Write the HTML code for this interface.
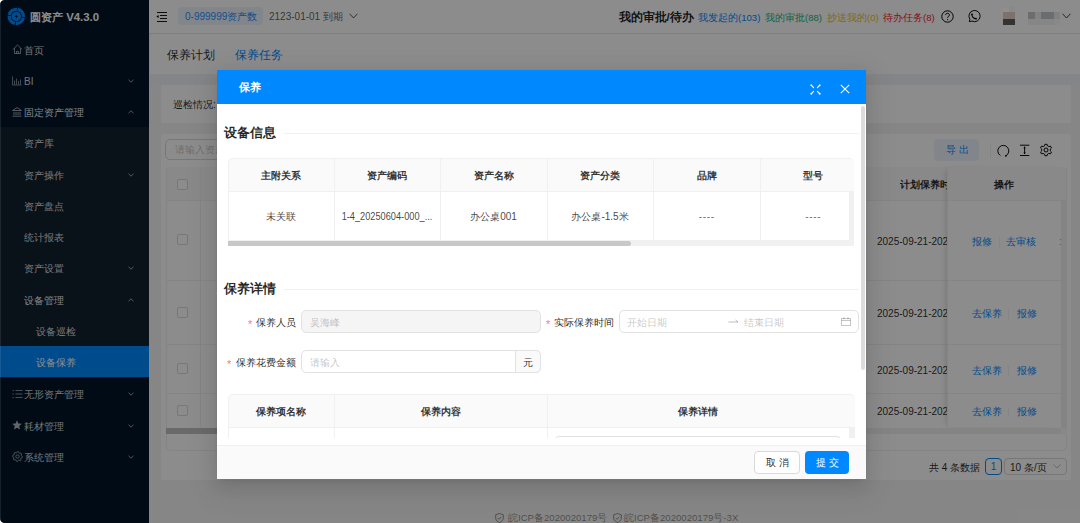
<!DOCTYPE html>
<html><head><meta charset="utf-8">
<style>
*{box-sizing:border-box;margin:0;padding:0}
html,body{width:1080px;height:523px;overflow:hidden;font-family:"Liberation Sans",sans-serif;font-size:10px;color:rgba(0,0,0,.85);background:#f5f5f5;position:relative}
.a{position:absolute;white-space:nowrap}
#side{position:absolute;left:0;top:0;width:149px;height:523px;background:#001529}
#side .it{position:absolute;left:0;width:149px;height:31px;color:rgba(255,255,255,.84);font-size:10px;line-height:31px}
#side .it span{top:1px}
#sub{position:absolute;left:0;top:127px;width:149px;height:251px;background:#12202f}
.chev{position:absolute;left:128px;width:6px;height:6px}
#hdr{position:absolute;left:149px;top:0;width:931px;height:34px;background:#fff;border-bottom:1px solid #e8e8e8}
.card{position:absolute;background:#fff;border-radius:3px}
#mask{position:absolute;left:0;top:0;width:1080px;height:523px;background:rgba(0,0,0,.45)}
#modal{position:absolute;left:217px;top:70px;width:649px;height:409px;background:#fff;box-shadow:0 6px 16px 0 rgba(0,0,0,.1),0 3px 6px -4px rgba(0,0,0,.14),0 9px 28px 8px rgba(0,0,0,.06);overflow:hidden}
#mhead{position:absolute;left:0;top:0;width:649px;height:34px;background:#0089ff;color:#fff}
.th{position:absolute;top:0;height:34px;line-height:34px;padding-top:1px;text-align:center;font-weight:bold;font-size:10px;color:rgba(0,0,0,.8)}
.td{position:absolute;height:48px;line-height:48px;text-align:center;font-size:10px;color:rgba(0,0,0,.75)}
.vl{position:absolute;width:1px;background:#f0f0f0}
.hl{position:absolute;height:1px;background:#f0f0f0}
.cb{position:absolute;width:11px;height:11px;border:1px solid #d9d9d9;border-radius:2px;background:#fff}
</style></head><body>

<!-- ============ SIDEBAR ============ -->
<div id="side">
  <svg class="a" style="left:7px;top:7px" width="19" height="19" viewBox="0 0 19 19">
    <circle cx="9.3" cy="9.4" r="7.1" fill="none" stroke="#0089ff" stroke-width="3.3" stroke-dasharray="10.3 0.85" transform="rotate(-80 9.3 9.4)"/>
    <circle cx="9.3" cy="9.4" r="4.75" fill="#0089ff"/>
    <path d="M9.3 7.6 L9.85 8.85 L11.1 9.4 L9.85 9.95 L9.3 11.2 L8.75 9.95 L7.5 9.4 L8.75 8.85Z" fill="#001529"/>
  </svg>
  <div class="a" style="left:30px;top:10px;font-size:11.4px;font-weight:bold;color:#fff;line-height:14px">圆资产 V4.3.0</div>

  <div id="sub"></div>
  <div class="it" style="top:34px"><svg class="a" style="left:12px;top:10px" width="11" height="11" viewBox="0 0 11 11"><path d="M.8 5.6 L5.5 1 L10.2 5.6 M2.5 4.2 V9.5 H8.5 V4.2 M4.5 9.5 V7.5 H6.5 V9.5" fill="none" stroke="rgba(255,255,255,.65)" stroke-width=".85" stroke-linejoin="round"/></svg><span class="a" style="left:24px">首页</span></div>
  <div class="it" style="top:65px"><svg class="a" style="left:12px;top:11px" width="10" height="10" viewBox="0 0 10 10"><path d="M.5 .5 V9 H9.5 M2.5 8.5 V4.5 M4.5 8.5 V2.5 M6.5 8.5 V5 M8.5 8.5 V3.5" fill="none" stroke="rgba(255,255,255,.6)" stroke-width=".8"/></svg><span class="a" style="left:24px">BI</span><svg class="chev" style="top:13px" viewBox="0 0 6 6"><path d="M0.5 1.8 L3 4.2 L5.5 1.8" fill="none" stroke="rgba(255,255,255,.65)" stroke-width=".9"/></svg></div>
  <div class="it" style="top:96px;color:rgba(255,255,255,.95)"><svg class="a" style="left:12px;top:10.5px" width="10" height="10" viewBox="0 0 10 10"><path d="M.6 3.5 L5 .6 L9.4 3.5 Z M2 4.8 V8 M4 4.8 V8 M6 4.8 V8 M8 4.8 V8 M.5 9.2 H9.5" fill="none" stroke="rgba(255,255,255,.7)" stroke-width=".85"/></svg><span class="a" style="left:24px">固定资产管理</span><svg class="chev" style="top:13px" viewBox="0 0 6 6"><path d="M0.5 4.2 L3 1.8 L5.5 4.2" fill="none" stroke="rgba(255,255,255,.65)" stroke-width=".9"/></svg></div>
  <div class="it" style="top:127px"><span class="a" style="left:24px">资产库</span></div>
  <div class="it" style="top:159px"><span class="a" style="left:24px">资产操作</span><svg class="chev" style="top:13px" viewBox="0 0 6 6"><path d="M0.5 1.8 L3 4.2 L5.5 1.8" fill="none" stroke="rgba(255,255,255,.65)" stroke-width=".9"/></svg></div>
  <div class="it" style="top:190px"><span class="a" style="left:24px">资产盘点</span></div>
  <div class="it" style="top:221px"><span class="a" style="left:24px">统计报表</span></div>
  <div class="it" style="top:252px"><span class="a" style="left:24px">资产设置</span><svg class="chev" style="top:13px" viewBox="0 0 6 6"><path d="M0.5 1.8 L3 4.2 L5.5 1.8" fill="none" stroke="rgba(255,255,255,.65)" stroke-width=".9"/></svg></div>
  <div class="it" style="top:284px;color:rgba(255,255,255,.95)"><span class="a" style="left:24px">设备管理</span><svg class="chev" style="top:13px" viewBox="0 0 6 6"><path d="M0.5 4.2 L3 1.8 L5.5 4.2" fill="none" stroke="rgba(255,255,255,.65)" stroke-width=".9"/></svg></div>
  <div class="it" style="top:315px"><span class="a" style="left:35.5px">设备巡检</span></div>
  <div class="it" style="top:346px;background:#0089ff;color:#fff"><span class="a" style="left:35.5px">设备保养</span></div>
  <div class="it" style="top:378px"><svg class="a" style="left:12px;top:11px" width="11" height="10" viewBox="0 0 11 10"><path d="M.5 1.5 H1.8 M.5 5 H1.8 M.5 8.5 H1.8 M3.5 1.5 H10.5 M3.5 5 H10.5 M3.5 8.5 H10.5" fill="none" stroke="rgba(255,255,255,.65)" stroke-width=".8"/></svg><span class="a" style="left:24px">无形资产管理</span><svg class="chev" style="top:13px" viewBox="0 0 6 6"><path d="M0.5 1.8 L3 4.2 L5.5 1.8" fill="none" stroke="rgba(255,255,255,.65)" stroke-width=".9"/></svg></div>
  <div class="it" style="top:410px"><svg class="a" style="left:12px;top:10px" width="10" height="10" viewBox="0 0 10 10"><path d="M5 .3 L6.4 3.4 L9.8 3.7 L7.2 6 L8 9.5 L5 7.7 L2 9.5 L2.8 6 L.2 3.7 L3.6 3.4Z" fill="rgba(255,255,255,.7)"/></svg><span class="a" style="left:24px">耗材管理</span><svg class="chev" style="top:13px" viewBox="0 0 6 6"><path d="M0.5 1.8 L3 4.2 L5.5 1.8" fill="none" stroke="rgba(255,255,255,.65)" stroke-width=".9"/></svg></div>
  <div class="it" style="top:441px"><svg class="a" style="left:12px;top:10px" width="11" height="11" viewBox="0 0 11 11"><path d="M5.50 0.60 L6.46 0.69 L6.99 1.90 L7.67 2.26 L8.96 2.04 L9.57 2.78 L9.10 4.01 L9.33 4.74 L10.40 5.50 L10.31 6.46 L9.10 6.99 L8.74 7.67 L8.96 8.96 L8.22 9.57 L6.99 9.10 L6.26 9.33 L5.50 10.40 L4.54 10.31 L4.01 9.10 L3.33 8.74 L2.04 8.96 L1.43 8.22 L1.90 6.99 L1.67 6.26 L0.60 5.50 L0.69 4.54 L1.90 4.01 L2.26 3.33 L2.04 2.04 L2.78 1.43 L4.01 1.90 L4.74 1.67Z" fill="none" stroke="rgba(255,255,255,.65)" stroke-width=".8" stroke-linejoin="round"/><circle cx="5.5" cy="5.5" r="1.7" fill="none" stroke="rgba(255,255,255,.65)" stroke-width=".8"/></svg><span class="a" style="left:24px">系统管理</span><svg class="chev" style="top:13px" viewBox="0 0 6 6"><path d="M0.5 1.8 L3 4.2 L5.5 1.8" fill="none" stroke="rgba(255,255,255,.65)" stroke-width=".9"/></svg></div>
</div>

<!-- ============ HEADER ============ -->
<div id="hdr">
  <svg class="a" style="left:7px;top:11px" width="12" height="11" viewBox="0 0 12 11"><path d="M.5 1 H11 M4 4 H11 M4 7 H11 M.5 10 H11" stroke="#000" stroke-width=".9" fill="none" shape-rendering="crispEdges"/><path d="M.3 5.5 L2.6 3.9 V7.1Z" fill="#000"/></svg>
  <div class="a" style="left:29px;top:7px;width:85px;height:18px;background:#edf5fd;border-radius:3px"></div>
  <div class="a" style="left:36px;top:10px;font-size:10px;line-height:13px;color:#2a8eff">0-999999资产数</div>
  <div class="a" style="left:120px;top:10px;font-size:10px;line-height:13px;color:rgba(0,0,0,.65)">2123-01-01 到期</div>
  <svg class="a" style="left:200px;top:13px" width="9" height="6" viewBox="0 0 9 6"><path d="M0.5 0.7 L4.5 5 L8.5 0.7" fill="none" stroke="rgba(0,0,0,.65)" stroke-width="1"/></svg>

  <div class="a" style="left:469.5px;top:10px;font-size:11.5px;line-height:14px;font-weight:bold;color:rgba(0,0,0,.88)">我的审批/待办</div>
  <div class="a" style="left:549px;top:11.5px;font-size:9.6px;line-height:12px;color:#0089ff">我发起的(103)</div>
  <div class="a" style="left:616px;top:11.5px;font-size:9.6px;line-height:12px;color:#1fb27a">我的审批(88)</div>
  <div class="a" style="left:678px;top:11.5px;font-size:9.6px;line-height:12px;color:#eec21c">抄送我的(0)</div>
  <div class="a" style="left:734px;top:11.5px;font-size:9.6px;line-height:12px;color:#f5222d">待办任务(8)</div>
  <svg class="a" style="left:792px;top:10px" width="13" height="13" viewBox="0 0 13 13"><circle cx="6.5" cy="6.5" r="5.7" fill="none" stroke="#000" stroke-width="1"/><path d="M4.6 5.1 C4.6 3.9 5.5 3.3 6.5 3.3 C7.6 3.3 8.4 4 8.4 5 C8.4 6.2 6.6 6.4 6.6 7.8" fill="none" stroke="#000" stroke-width="1"/><circle cx="6.6" cy="9.6" r=".6" fill="#000"/></svg>
  <svg class="a" style="left:818px;top:10px" width="14" height="14" viewBox="0 0 14 14"><path d="M2.3 11.6 L2.9 9.2 A5.6 5.6 0 1 1 5.1 11.1 Z" fill="none" stroke="#000" stroke-width=".95" stroke-linejoin="round"/><path d="M4.9 4.3 C4.7 6.6 6.6 8.7 9 8.7" fill="none" stroke="#000" stroke-width="1.1" stroke-linecap="round"/><circle cx="5" cy="4.3" r=".85" fill="#000"/><circle cx="9" cy="8.6" r=".85" fill="#000"/></svg>
  <svg class="a" style="left:913px;top:13px" width="9" height="6" viewBox="0 0 9 6"><path d="M0.5 0.7 L4.5 5 L8.5 0.7" fill="none" stroke="rgba(0,0,0,.75)" stroke-width="1"/></svg>
</div>

<!-- ============ MAIN ============ -->
<div class="card" style="left:150px;top:34px;width:930px;height:40px;border-radius:5px 0 0 0"></div>
<div class="a" style="left:167px;top:47.5px;font-size:11.5px;line-height:14px;color:rgba(0,0,0,.85)">保养计划</div>
<div class="a" style="left:235px;top:47.5px;font-size:11.5px;line-height:14px;color:#0089ff">保养任务</div>

<div class="a" style="left:149px;top:74px;width:931px;height:11px;background:#f0f2f5"></div>
<div class="card" style="left:161px;top:85px;width:910px;height:38px;border-radius:0"></div>
<div class="a" style="left:173px;top:98px;font-size:10px;line-height:13px">巡检情况:</div>

<div class="card" style="left:161px;top:134px;width:910px;height:346px;border-radius:1px"></div>
<div class="a" style="left:165px;top:139px;width:120px;height:21px;border:1px solid #d9d9d9;border-radius:5px"></div>
<div class="a" style="left:175px;top:144px;font-size:10px;line-height:12px;color:rgba(0,0,0,.25)">请输入资产</div>
<div class="a" style="left:934px;top:139px;width:45px;height:22px;background:#edf4fc;border-radius:4px"></div>
<div class="a" style="left:946px;top:144px;font-size:10px;line-height:12px;color:#0089ff;letter-spacing:3px">导出</div>
<div class="a" style="left:990px;top:143px;width:1px;height:15px;background:#f0f0f0"></div>
<svg class="a" style="left:996px;top:144px" width="14" height="14" viewBox="0 0 14 14"><path d="M4.3 11.5 A5.5 5.5 0 1 1 9.8 11.8" fill="none" stroke="#000" stroke-width=".95"/><circle cx="9.9" cy="11.8" r=".9" fill="#000"/></svg>
<svg class="a" style="left:1019px;top:144px" width="12" height="13" viewBox="0 0 12 13"><path d="M1 1.2 H10.3 M1 11.5 H10.3 M5.6 2.8 V9.8" fill="none" stroke="#000" stroke-width=".95"/><path d="M4.4 4.2 L5.6 2.4 L6.8 4.2Z M4.4 8.5 L5.6 10.3 L6.8 8.5Z" fill="#000"/></svg>
<svg class="a" style="left:1039px;top:143px" width="14" height="14" viewBox="0 0 14 14"><path d="M5.9 1.3 H8.1 L8.5 2.9 L9.8 3.6 L11.4 3.1 L12.5 5 L11.3 6.1 V7.9 L12.5 9 L11.4 10.9 L9.8 10.4 L8.5 11.1 L8.1 12.7 H5.9 L5.5 11.1 L4.2 10.4 L2.6 10.9 L1.5 9 L2.7 7.9 V6.1 L1.5 5 L2.6 3.1 L4.2 3.6 L5.5 2.9Z" fill="none" stroke="#000" stroke-width=".95" stroke-linejoin="round"/><circle cx="7" cy="7" r="2" fill="none" stroke="#000" stroke-width=".95"/></svg>

<!-- bg table -->
<div class="a" style="left:166px;top:167px;width:900px;height:34px;background:#fafafa;border-radius:5px 5px 0 0"></div>
<div class="hl" style="left:166px;top:200px;width:900px"></div>
<div class="hl" style="left:166px;top:280px;width:900px"></div>
<div class="hl" style="left:166px;top:344px;width:900px"></div>
<div class="hl" style="left:166px;top:393px;width:900px"></div>
<div class="vl" style="left:200px;top:167px;height:260px"></div>
<div class="a" style="left:947px;top:167px;width:114px;height:260px;box-shadow:-4px 0 6px -3px rgba(0,0,0,.15);background:transparent"></div>
<div class="vl" style="left:947px;top:167px;height:260px"></div>
<div class="vl" style="left:1061px;top:201px;height:226px"></div>
<div class="a" style="left:1061px;top:201px;width:6px;height:227px;background:#f0f0f0"></div>
<div class="cb" style="left:177px;top:179px"></div>
<div class="cb" style="left:177px;top:234px"></div>
<div class="cb" style="left:177px;top:307px"></div>
<div class="cb" style="left:177px;top:363px"></div>
<div class="cb" style="left:177px;top:405px"></div>
<div class="a" style="left:166px;top:167px;width:901px;height:284px;border:1px solid #f0f0f0;border-top:0;border-radius:0 0 5px 5px"></div>
<div class="a" style="left:166px;top:428px;width:895px;height:6px;background:#f0f0f0"></div>
<div class="a" style="left:1061px;top:428px;width:6px;height:6px;background:#f8f8f8"></div>
<div class="a" style="left:166px;top:428px;width:400px;height:6px;background:#c1c1c1;border-radius:0 3px 3px 0"></div>
<div class="a" style="left:900px;top:178px;font-size:10px;line-height:13px;font-weight:bold;width:47px;overflow:hidden">计划保养时间</div>
<div class="a" style="left:994px;top:178px;font-size:10px;line-height:13px;font-weight:bold">操作</div>
<div class="a" style="left:877px;top:235px;font-size:10px;line-height:13px;width:70px;overflow:hidden">2025-09-21-2025</div>
<div class="a" style="left:877px;top:307px;font-size:10px;line-height:13px;width:70px;overflow:hidden">2025-09-21-2025</div>
<div class="a" style="left:877px;top:364px;font-size:10px;line-height:13px;width:70px;overflow:hidden">2025-09-21-2025</div>
<div class="a" style="left:877px;top:405px;font-size:10px;line-height:13px;width:70px;overflow:hidden">2025-09-21-2025</div>
<div class="a" style="left:972px;top:235px;font-size:10px;line-height:13px;color:#0089ff">报修</div>
<div class="a" style="left:999px;top:237px;width:1px;height:10px;background:#f0f0f0"></div>
<div class="a" style="left:1006px;top:235px;font-size:10px;line-height:13px;color:#0089ff">去审核</div>
<div class="a" style="left:1059px;top:235px;font-size:10px;line-height:13px;color:rgba(0,0,0,.45)">:</div>
<div class="a" style="left:972px;top:307px;font-size:10px;line-height:13px;color:#0089ff">去保养</div>
<div class="a" style="left:1008px;top:309px;width:1px;height:10px;background:#f0f0f0"></div>
<div class="a" style="left:1017px;top:307px;font-size:10px;line-height:13px;color:#0089ff">报修</div>
<div class="a" style="left:972px;top:364px;font-size:10px;line-height:13px;color:#0089ff">去保养</div>
<div class="a" style="left:1008px;top:366px;width:1px;height:10px;background:#f0f0f0"></div>
<div class="a" style="left:1017px;top:364px;font-size:10px;line-height:13px;color:#0089ff">报修</div>
<div class="a" style="left:972px;top:405px;font-size:10px;line-height:13px;color:#0089ff">去保养</div>
<div class="a" style="left:1008px;top:407px;width:1px;height:10px;background:#f0f0f0"></div>
<div class="a" style="left:1017px;top:405px;font-size:10px;line-height:13px;color:#0089ff">报修</div>

<!-- pagination -->
<div class="a" style="left:929px;top:461px;font-size:10px;line-height:13px">共 4 条数据</div>
<div class="a" style="left:985px;top:458px;width:17px;height:17px;border:1px solid #0089ff;border-radius:4px;text-align:center;line-height:15px;font-size:10px;color:#0089ff">1</div>
<div class="a" style="left:1004px;top:458px;width:63px;height:17px;border:1px solid #d9d9d9;border-radius:4px"></div>
<div class="a" style="left:1010px;top:461px;font-size:10px;line-height:13px">10 条/页</div>
<svg class="a" style="left:1053px;top:464px" width="8" height="5" viewBox="0 0 8 5"><path d="M0.5 0.5 L4 4 L7.5 0.5" fill="none" stroke="rgba(0,0,0,.25)" stroke-width="1"/></svg>

<!-- footer -->
<svg class="a" style="left:495px;top:513px" width="9" height="10" viewBox="0 0 9 10"><path d="M4.5 .5 L8.3 1.8 V5 C8.3 7.3 6.5 8.8 4.5 9.5 C2.5 8.8 .7 7.3 .7 5 V1.8Z" fill="none" stroke="rgba(0,0,0,.45)" stroke-width=".9"/><path d="M2.8 5 L4.1 6.3 L6.3 3.8" fill="none" stroke="rgba(0,0,0,.45)" stroke-width=".9"/></svg>
<div class="a" style="left:508px;top:512px;font-size:9.6px;line-height:12px;color:rgba(0,0,0,.45)">皖ICP备2020020179号</div>
<svg class="a" style="left:613px;top:513px" width="9" height="10" viewBox="0 0 9 10"><path d="M4.5 .5 L8.3 1.8 V5 C8.3 7.3 6.5 8.8 4.5 9.5 C2.5 8.8 .7 7.3 .7 5 V1.8Z" fill="none" stroke="rgba(0,0,0,.45)" stroke-width=".9"/><path d="M2.8 5 L4.1 6.3 L6.3 3.8" fill="none" stroke="rgba(0,0,0,.45)" stroke-width=".9"/></svg>
<div class="a" style="left:624px;top:512px;font-size:9.6px;line-height:12px;color:rgba(0,0,0,.45)">皖ICP备2020020179号-3X</div>

<!-- ============ MASK ============ -->
<div id="mask"></div>

<!-- mosaic (unmasked) -->
<div class="a" style="left:1003px;top:8px;width:6px;height:4px;background:#8f8f8f"></div>
<div class="a" style="left:1009px;top:6px;width:6px;height:6px;background:#898989"></div>
<div class="a" style="left:1003px;top:12px;width:12px;height:7px;background:#7d716d"></div>
<div class="a" style="left:1022px;top:12px;width:6px;height:7px;background:#8e8d8b"></div>
<div class="a" style="left:1028px;top:12px;width:7px;height:7px;background:#6d6d6b"></div>
<div class="a" style="left:1035px;top:12px;width:6px;height:7px;background:#828382"></div>
<div class="a" style="left:1041px;top:12px;width:7px;height:7px;background:#686d72"></div>
<div class="a" style="left:1048px;top:12px;width:6px;height:7px;background:#6c6e6c"></div>
<div class="a" style="left:1054px;top:12px;width:6px;height:7px;background:#7f8284"></div>
<div class="a" style="left:1003px;top:19px;width:12px;height:6px;background:#333333"></div>
<div class="a" style="left:1028px;top:19px;width:26px;height:6px;background:#858787"></div>
<div class="a" style="left:1054px;top:19px;width:6px;height:6px;background:#888a89"></div>

<!-- ============ MODAL ============ -->
<div id="modal">
  <div id="mhead">
    <div class="a" style="left:22px;top:11px;font-size:11px;font-weight:bold;line-height:13px">保养</div>
    <svg class="a" style="left:593px;top:14px" width="11" height="11" viewBox="0 0 11 11"><g fill="none" stroke="#fff" stroke-width="1.1" stroke-linecap="round"><path d="M1.2 1.2 L3.6 3.6"/><path d="M9.8 1.2 L7.4 3.6"/><path d="M1.2 9.8 L3.6 7.4"/><path d="M9.8 9.8 L7.4 7.4"/></g><g fill="#fff"><circle cx="1.3" cy="1.3" r=".9"/><circle cx="9.7" cy="1.3" r=".9"/><circle cx="1.3" cy="9.7" r=".9"/><circle cx="9.7" cy="9.7" r=".9"/></g></svg>
    <svg class="a" style="left:623px;top:14px" width="10" height="10" viewBox="0 0 10 10"><path d="M.8 .8 L9.2 9.2 M9.2 .8 L.8 9.2" stroke="#fff" stroke-width="1.1"/></svg>
  </div>
  <!-- body scrollbar -->
  <div class="a" style="left:644px;top:36px;width:4px;height:264px;background:#dcdcdc;border-radius:2px"></div>

  <div class="a" style="left:7px;top:55px;font-size:12.6px;line-height:16px;font-weight:bold">设备信息</div>
  <div class="hl" style="left:67px;top:63px;width:575px"></div>

  <!-- table 1 -->
  <div class="a" style="left:11px;top:88px;width:626px;height:33px;background:#fafafa;border-radius:5px 5px 0 0"></div>
  <div class="a" style="left:11px;top:88px;width:626px;height:83px;border:1px solid #f0f0f0;border-bottom:0;border-right:0;border-radius:5px 5px 0 0"></div>
  <div class="hl" style="left:11px;top:121px;width:626px"></div>
  <div class="vl" style="left:117px;top:88px;height:82px"></div>
  <div class="vl" style="left:223px;top:88px;height:82px"></div>
  <div class="vl" style="left:330px;top:88px;height:82px"></div>
  <div class="vl" style="left:436px;top:88px;height:82px"></div>
  <div class="vl" style="left:543px;top:88px;height:82px"></div>
  <div class="a" style="left:632px;top:122px;width:5px;height:48px;background:#f0f0f0"></div>
  <div class="a" style="left:11px;top:170px;width:626px;height:6px;background:#f1f1f1"></div>
  <div class="a" style="left:11px;top:171px;width:403px;height:5px;background:#c8c8ca;border-radius:0 3px 3px 0"></div>
  <div class="th" style="left:11px;top:88px;width:106px;height:33px;line-height:33px">主附关系</div>
  <div class="th" style="left:117px;top:88px;width:106px;height:33px;line-height:33px">资产编码</div>
  <div class="th" style="left:223px;top:88px;width:107px;height:33px;line-height:33px">资产名称</div>
  <div class="th" style="left:330px;top:88px;width:106px;height:33px;line-height:33px">资产分类</div>
  <div class="th" style="left:436px;top:88px;width:107px;height:33px;line-height:33px">品牌</div>
  <div class="th" style="left:543px;top:88px;width:106px;height:33px;line-height:33px">型号</div>
  <div class="td" style="left:11px;top:122px;width:106px;height:49px;line-height:49px">未关联</div>
  <div class="td" style="left:117px;top:122px;width:106px;height:49px;line-height:49px;font-size:10.6px;transform:scaleX(.87);transform-origin:53px 0">1-4_20250604-000_...</div>
  <div class="td" style="left:223px;top:122px;width:107px;height:49px;line-height:49px">办公桌001</div>
  <div class="td" style="left:330px;top:122px;width:106px;height:49px;line-height:49px">办公桌-1.5米</div>
  <div class="td" style="left:436px;top:122px;width:107px;height:49px;line-height:49px;color:rgba(0,0,0,.6);letter-spacing:.7px;text-indent:.7px">----</div>
  <div class="td" style="left:543px;top:122px;width:106px;height:49px;line-height:49px;color:rgba(0,0,0,.6);letter-spacing:.7px;text-indent:.7px">----</div>

  <div class="a" style="left:7px;top:211px;font-size:12.6px;line-height:16px;font-weight:bold">保养详情</div>
  <div class="hl" style="left:67px;top:219px;width:575px"></div>

  <!-- form -->
  <div class="a" style="left:31px;top:248px;font-size:11px;line-height:13px;color:#ff7875">*</div>
  <div class="a" style="left:39px;top:246px;font-size:10px;line-height:13px">保养人员</div>
  <div class="a" style="left:84px;top:240px;width:240px;height:23px;background:#f5f5f5;border:1px solid #e2e2e2;border-radius:5px"></div>
  <div class="a" style="left:93px;top:246px;font-size:10px;line-height:13px;color:rgba(0,0,0,.25)">吴海峰</div>

  <div class="a" style="left:329px;top:248px;font-size:11px;line-height:13px;color:#ff7875">*</div>
  <div class="a" style="left:337px;top:246px;font-size:10px;line-height:13px">实际保养时间</div>
  <div class="a" style="left:402px;top:240px;width:240px;height:23px;border:1px solid #e2e2e2;border-radius:5px"></div>
  <div class="a" style="left:410px;top:246px;font-size:10px;line-height:13px;color:rgba(0,0,0,.25)">开始日期</div>
  <svg class="a" style="left:511px;top:249px" width="11" height="6" viewBox="0 0 11 6"><path d="M0.5 3 H10 M7.5 1 L10 3" fill="none" stroke="rgba(0,0,0,.25)" stroke-width="1"/></svg>
  <div class="a" style="left:527px;top:246px;font-size:10px;line-height:13px;color:rgba(0,0,0,.25)">结束日期</div>
  <svg class="a" style="left:624px;top:247px" width="10" height="9" viewBox="0 0 10 9"><path d="M.5 1.5 H9.5 V8.5 H.5Z M.5 3.5 H9.5 M3 .2 V2.5 M7 .2 V2.5" fill="none" stroke="rgba(0,0,0,.25)" stroke-width=".9"/></svg>

  <div class="a" style="left:10px;top:288px;font-size:11px;line-height:13px;color:#ff7875">*</div>
  <div class="a" style="left:19px;top:286px;font-size:10px;line-height:13px">保养花费金额</div>
  <div class="a" style="left:84px;top:280px;width:240px;height:23px;border:1px solid #e2e2e2;border-radius:5px"></div>
  <div class="a" style="left:298px;top:280px;width:26px;height:23px;border:1px solid #e2e2e2;background:#fafafa;border-radius:0 5px 5px 0"></div>
  <div class="a" style="left:93px;top:286px;font-size:10px;line-height:13px;color:rgba(0,0,0,.25)">请输入</div>
  <div class="a" style="left:306px;top:286px;font-size:10px;line-height:13px">元</div>

  <!-- table 2 -->
  <div class="a" style="left:11px;top:324px;width:627px;height:33px;background:#fafafa;border-radius:5px 5px 0 0"></div>
  <div class="a" style="left:11px;top:324px;width:627px;height:44px;border:1px solid #f0f0f0;border-bottom:0;border-right:0;border-radius:5px 5px 0 0"></div>
  <div class="hl" style="left:11px;top:357px;width:627px"></div>
  <div class="vl" style="left:117px;top:324px;height:44px"></div>
  <div class="vl" style="left:330px;top:324px;height:44px"></div>
  <div class="a" style="left:632px;top:358px;width:6px;height:10px;background:#f0f0f0"></div>
  <div class="th" style="left:11px;top:324px;width:106px;height:33px;line-height:33px">保养项名称</div>
  <div class="th" style="left:117px;top:324px;width:213px;height:33px;line-height:33px">保养内容</div>
  <div class="th" style="left:330px;top:324px;width:302px;height:33px;line-height:33px">保养详情</div>
  <div class="a" style="left:337px;top:366px;width:288px;height:20px;border:1px solid #e2e2e2;border-radius:5px"></div>
  <div class="a" style="left:0;top:368px;width:640px;height:7px;background:#fff"></div>

  <!-- footer -->
  <div class="a" style="left:0;top:375px;width:649px;height:34px;background:#fafafa;border-top:1px solid #f0f0f0"></div>
  <div class="a" style="left:537px;top:381px;width:46px;height:23px;border:1px solid #d9d9d9;background:#fff;border-radius:4px;text-align:center;line-height:21px;font-size:10px;letter-spacing:3px;text-indent:3px">取消</div>
  <div class="a" style="left:588px;top:381px;width:44px;height:23px;background:#0089ff;border-radius:4px;text-align:center;line-height:23px;font-size:10px;letter-spacing:3px;text-indent:3px;color:#fff">提交</div>
</div>

<svg class="a" style="left:0;top:0" width="5" height="5" viewBox="0 0 5 5"><path d="M0 0 H4.5 A4.5 4.5 0 0 0 0 4.5Z" fill="#fff"/></svg>
<div class="a" style="left:0;top:4px;width:1px;height:515px;background:rgba(255,255,255,.09)"></div>
<svg class="a" style="left:0;top:518px" width="5" height="5" viewBox="0 0 5 5"><path d="M0 0.5 A4.5 4.5 0 0 0 4.5 5 H0Z" fill="#fff"/></svg>
</body></html>
